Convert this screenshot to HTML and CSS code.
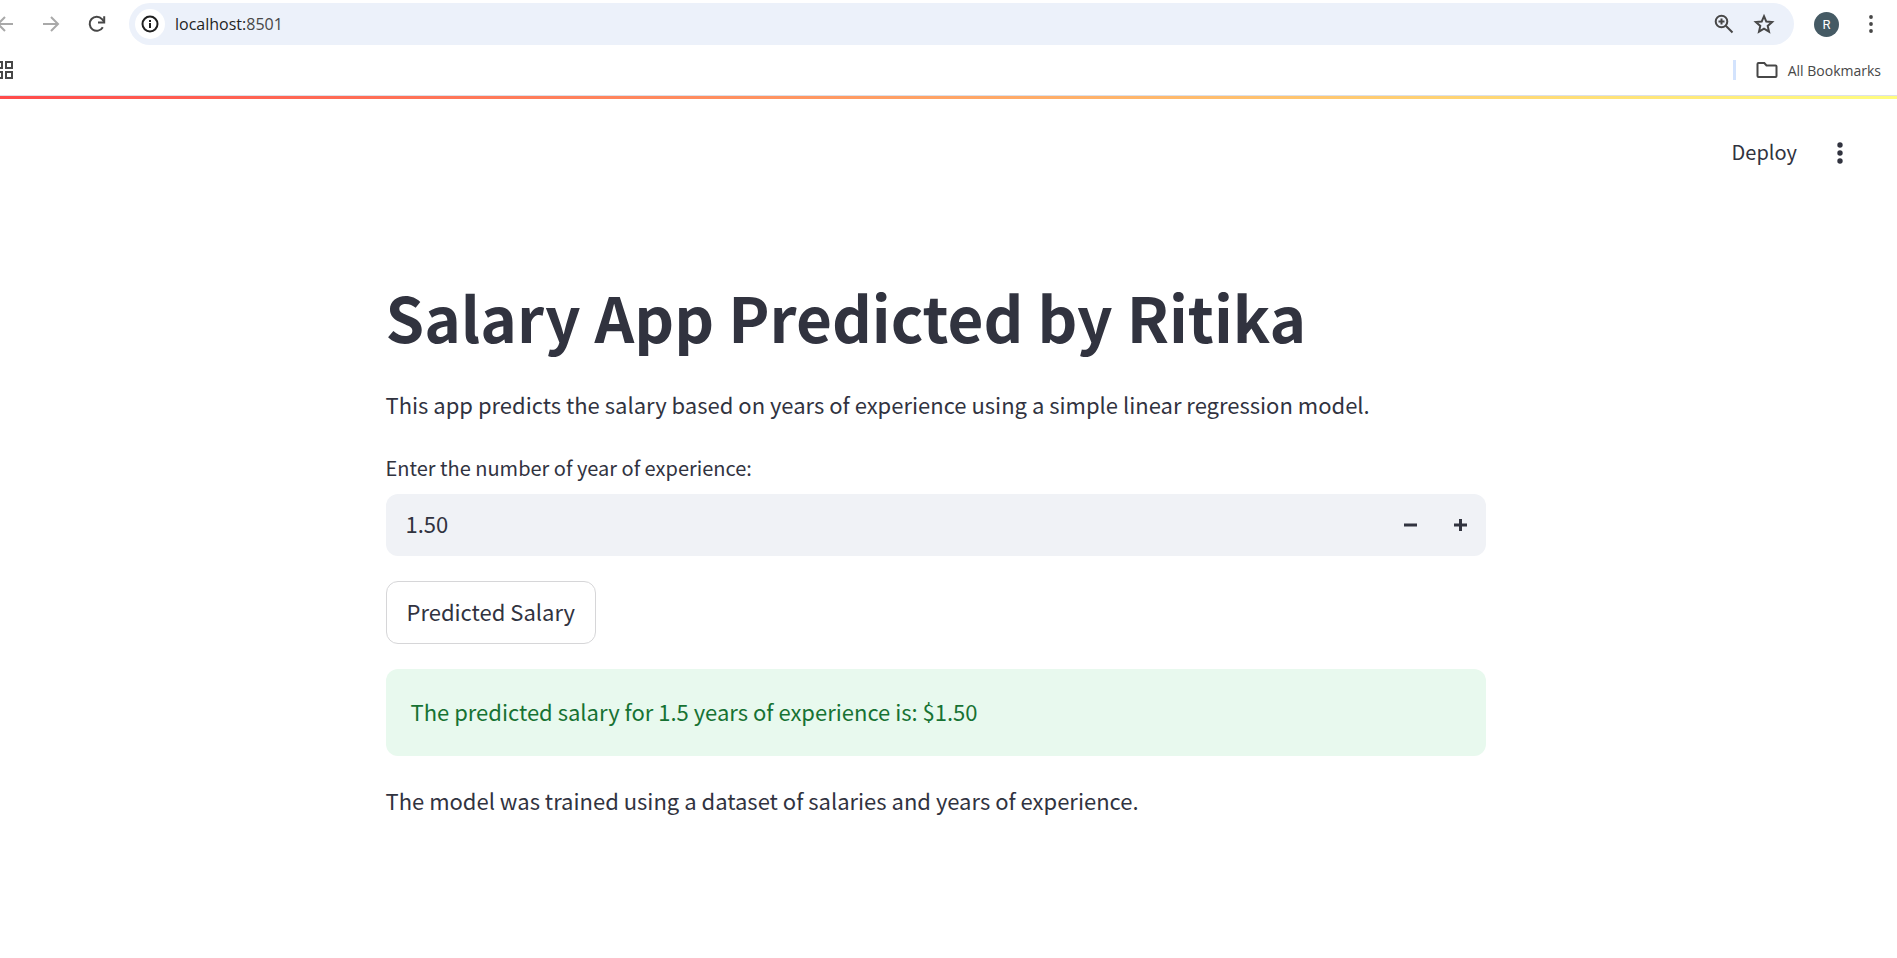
FILE: index.html
```
<!DOCTYPE html>
<html lang="en">
<head>
<meta charset="utf-8">
<title>Salary App</title>
<link rel="stylesheet" href="styles.css">
</head>
<body>
<header class="browser">
  <div class="toolbar">
    <nav class="nav" aria-label="History">
      <button class="icon-btn faded" aria-label="Back"><svg width="18" height="18" viewBox="0 0 18 18"><path d="M17 9H2M9 2L2 9l7 7"/></svg></button>
      <button class="icon-btn faded" aria-label="Forward"><svg width="18" height="18" viewBox="0 0 18 18"><path d="M1 9h15M9 2l7 7-7 7"/></svg></button>
      <button class="icon-btn" aria-label="Reload"><svg width="18" height="18" viewBox="0 0 18 18"><path d="M14.800 12.200A7 7 0 1 1 14 4.200L16 6.500"/><path d="M16.200 1.200v6.300H10"/></svg></button>
    </nav>
    <div class="omnibox">
      <button class="site-info" aria-label="Site information"><svg width="18" height="18" viewBox="0 0 18 18"><circle cx="9" cy="9" r="7.500"/><path d="M9 8v5M9 5v2"/></svg></button>
      <span class="address">localhost:<span class="port">8501</span></span>
      <button class="icon-btn" aria-label="Zoom"><svg width="20" height="20" viewBox="0 0 20 20"><circle cx="7.500" cy="7.500" r="5.800"/><path d="M11.800 11.800L18.500 18.500M4.500 7.500h6M7.500 4.500v6"/></svg></button>
      <button class="icon-btn" aria-label="Bookmark this tab"><svg width="20" height="20" viewBox="0 0 20 20"><path d="M10 2.200l2.300 5.400 5.800.5-4.400 3.800 1.300 5.700-5-3-5 3 1.300-5.700L1.900 8.100l5.800-.5z"/></svg></button>
    </div>
    <button class="avatar" aria-label="Profile">R</button>
    <button class="icon-btn" aria-label="Browser menu"><svg class="dots" width="20" height="20" viewBox="0 0 20 20"><circle cx="10" cy="3" r="1.900"/><circle cx="10" cy="10" r="1.900"/><circle cx="10" cy="17" r="1.900"/></svg></button>
  </div>
  <div class="bookmarks">
    <button class="apps" aria-label="Apps"><svg width="20" height="20" viewBox="0 0 20 20"><path d="M2 2h6v6H2zM12 2h6v6h-6zM2 12h6v6H2zM12 12h6v6h-6z"/></svg></button>
    <button class="all-bookmarks"><svg width="22" height="18" viewBox="0 0 22 18"><path d="M2.500 2h5.800l2.200 2.500h9q1 0 1 1V15q0 1-1 1h-17q-1 0-1-1V3q0-1 1-1z"/></svg>All Bookmarks</button>
  </div>
</header>
<div class="decoration"></div>
<div class="app-header">
  <button class="deploy">Deploy</button>
  <button class="app-menu" aria-label="Main menu"><svg class="dots" width="24" height="24" viewBox="0 0 24 24"><circle cx="12" cy="4" r="2.700"/><circle cx="12" cy="12" r="2.700"/><circle cx="12" cy="20" r="2.700"/></svg></button>
</div>
<div class="app-body">
  <main class="content">
    <h1 class="title">Salary App Predicted by Ritika</h1>
    <p class="text">This app predicts the salary based on years of experience using a simple linear regression model.</p>
    <div class="field">
      <label class="label" for="years">Enter the number of year of experience:</label>
      <div class="number">
        <input class="number-input" id="years" type="text" inputmode="decimal" value="1.50">
        <button class="step" aria-label="Decrease"><svg width="14" height="14" viewBox="0 0 14 14"><path d="M0 7h13"/></svg></button>
        <button class="step" aria-label="Increase"><svg width="14" height="14" viewBox="0 0 14 14"><path d="M0 7h13M6.500 1v12"/></svg></button>
      </div>
    </div>
    <button class="predict">Predicted Salary</button>
    <div class="alert" role="status">The predicted salary for 1.5 years of experience is: $1.50</div>
    <p class="text">The model was trained using a dataset of salaries and years of experience.</p>
  </main>
</div>
</body>
</html>
```
FILE: styles.css
```
* { box-sizing: border-box; }
body {
  margin: 0;
  background: #fff;
  color: #31333f;
  font-family: "Noto Sans CJK SC", "Source Sans Pro", sans-serif;
  font-size: 22px;
}
button {
  margin: 0;
  padding: 0;
  border: 0;
  background: none;
  color: inherit;
  font: inherit;
  cursor: pointer;
}
svg {
  display: block;
  overflow: visible;
  fill: none;
  stroke: currentColor;
  stroke-width: 2;
}
.dots { fill: currentColor; stroke: none; }

.browser {
  color: #474747;
  font-family: "Open Sans", "Segoe UI", sans-serif;
  border-bottom: 1px solid #dde1ea;
}
.toolbar {
  display: flex;
  align-items: center;
  padding: 3px 16px 0 0;
}
.nav {
  display: flex;
  gap: 28px;
  margin-left: -4px;
  padding-right: 23px;
}
.faded { color: #a9a9a9; }
.nav .icon-btn { width: 18px; }
.omnibox {
  flex: 1;
  display: flex;
  align-items: center;
  gap: 20px;
  height: 42px;
  padding: 0 20px 0 6px;
  border-radius: 21px;
  background: #ecf1fa;
}
.site-info {
  display: grid;
  place-items: center;
  width: 30px;
  height: 30px;
  border-radius: 50%;
  background: #fff;
  color: #1f1f1f;
}
.address {
  flex: 1;
  margin-left: -10px;
  font-size: 16px;
  line-height: 24px;
  color: #1f1f1f;
}
.port { color: #474747; }
.avatar {
  width: 25px;
  height: 25px;
  margin: 0 22px 0 20px;
  border-radius: 50%;
  background: #455a64;
  color: #fff;
  font-family: Roboto, sans-serif;
  font-size: 13px;
}
.bookmarks {
  display: flex;
  align-items: center;
  justify-content: space-between;
  height: 50px;
  padding-right: 16px;
}
.apps { margin-left: -6px; }
.all-bookmarks {
  display: flex;
  align-items: center;
  gap: 10px;
  height: 20px;
  padding-left: 20px;
  border-left: 3px solid #d3e3fd;
  font-size: 14px;
}
.decoration {
  height: 3px;
  background: linear-gradient(90deg, #ff4b4b, #fffd80);
}

.app-header {
  display: flex;
  align-items: center;
  justify-content: flex-end;
  gap: 31px;
  padding: 38px 45px 0 0;
}
.deploy {
  padding-bottom: 2px;
  font-size: 20px;
  line-height: 30px;
}

.app-body {
  padding: 110px 26px 0 0;
}
.content {
  display: flex;
  flex-direction: column;
  max-width: 1100px;
  margin: 0 auto;
}
.title {
  margin: 0 0 31px;
  font-size: 62px;
  font-weight: 700;
  line-height: 74px;
}
.text {
  margin: 0;
  line-height: 40px;
}
.field {
  display: flex;
  flex-direction: column;
  gap: 11px;
  margin: 29px 0 25px;
}
.label {
  font-size: 20px;
  line-height: 30px;
}
.number {
  display: flex;
  height: 62px;
  border-radius: 12px;
  background: #f0f2f6;
  overflow: hidden;
}
.number-input {
  flex: 1;
  min-width: 0;
  padding: 0 20px 4px;
  border: 0;
  background: none;
  color: inherit;
  font: inherit;
}
.step {
  display: grid;
  place-items: center;
  width: 50px;
}
.step svg { stroke-width: 3; }
.predict {
  align-self: flex-start;
  height: 63px;
  padding: 0 20px 4px;
  border: 1px solid #d6d6d8;
  border-radius: 12px;
}
.alert {
  margin: 25px 0 24px;
  padding: 22px 25px 25px;
  border-radius: 12px;
  background: #e8f9ee;
  color: #177233;
  line-height: 40px;
}
```
